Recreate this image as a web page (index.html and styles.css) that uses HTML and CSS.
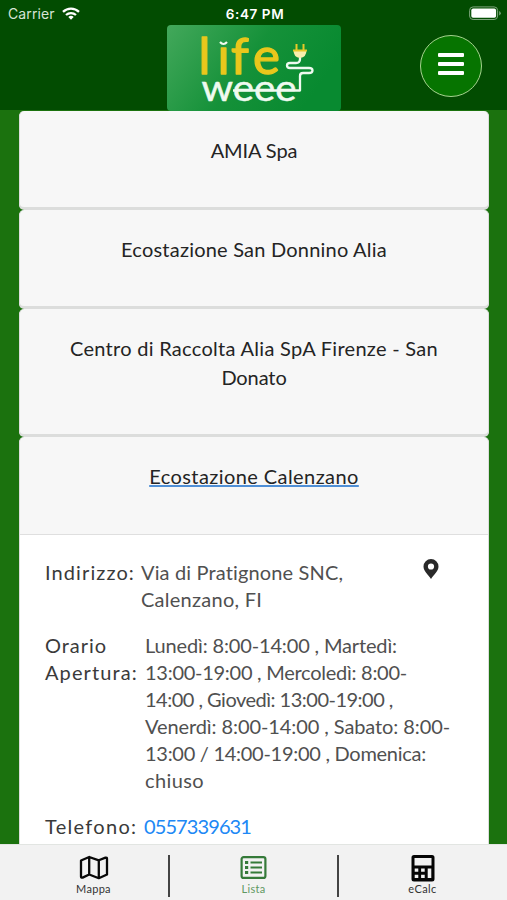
FILE: index.html
```html
<!DOCTYPE html>
<html lang="it">
<head>
<meta charset="utf-8">
<title>Life Weee</title>
<link rel="stylesheet" href="styles.css">
</head>
<body>
<div class="app">
  <header class="header">
    <div class="status">
      <div class="carrier"><span>Carrier</span>
        <svg width="18" height="14" viewBox="0 0 18 14" fill="none" stroke="#fff" stroke-width="2.3"><path d="M1 4.9a11.6 11.6 0 0 1 16 0M4 8a7.4 7.4 0 0 1 10 0"/><path d="M9 12.7 6.3 10a4 4 0 0 1 5.4 0z" fill="#fff" stroke="none"/></svg>
      </div>
      <span class="clock">6:47 PM</span>
      <svg class="battery" width="33" height="15" viewBox="0 0 33 15"><rect x=".6" y=".9" width="28" height="12.6" rx="3.5" fill="none" stroke="#7da47b"/><rect x="2.3" y="2.6" width="24.8" height="9.2" rx="1.8" fill="#fff"/><path d="M30.2 5v4.4q1.6-.8 1.6-2.2T30.2 5z" fill="#7da47b"/></svg>
    </div>
    <div class="bar">
      <svg class="logo" width="174" height="86" viewBox="0 0 174 86">
        <defs><linearGradient id="g" x1="0" y1="0" x2="1" y2=".35"><stop offset="0" stop-color="#43a85b"/><stop offset=".55" stop-color="#159139"/><stop offset="1" stop-color="#088a30"/></linearGradient></defs>
        <rect width="174" height="86" rx="4" fill="url(#g)"/>
        <text class="life" x="31.500 50.500 64 86" y="49">lıfe</text>
        <path d="M53 17q3.500 4 7 0" fill="none" stroke="#f3faf0" stroke-width="2.2"/>
        <text class="weee" x="34.500" y="75.700" textLength="95" lengthAdjust="spacingAndGlyphs">weee</text>
        <path d="M66 65.500h67V51q0-3 3-3h6q3.500 0 3.500-2.500T142 43h-19q-3 0-3-2.500t3-2.500h6q4 0 4-4V31" fill="none" stroke="#effaf0" stroke-width="2.300" stroke-linejoin="round"/>
        <path d="M126.500 25h13q0 7.500-6.500 8-6.500-.5-6.500-8z" fill="#f8efad"/>
        <path d="M129.500 19v6M136.500 19v6M126 25.500h14" stroke="#e8c928" stroke-width="2"/>
      </svg>
      <button class="menu" aria-label="Menu"><i></i><i></i><i></i></button>
    </div>
  </header>

  <main class="list">
    <section class="card"><h2><span class="t-amia">AMIA Spa</span></h2></section>
    <section class="card"><h2><span class="t-donnino">Ecostazione San Donnino Alia</span></h2></section>
    <section class="card"><h2><span class="t-centro">Centro di Raccolta Alia SpA Firenze - San</span><br><span class="t-amia">Donato</span></h2></section>
    <section class="card open">
      <h2><span class="t-calenzano">Ecostazione Calenzano</span></h2>
      <div class="details">
        <div class="row address"><div class="label">Indirizzo:</div>
          <div class="value"><span class="s-via">Via di Pratignone SNC,</span><br><span class="s-city">Calenzano, FI</span></div>
          <svg class="pin" width="16" height="20" viewBox="0 0 16 20"><path fill="#292929" fill-rule="evenodd" d="M8 0a7.500 7.500 0 0 1 7.500 7.500C15.500 12 11 15.500 8 20 5 15.500.5 12 .5 7.500A7.500 7.500 0 0 1 8 0zm0 4.400a3.100 3.100 0 1 0 0 6.200 3.100 3.100 0 0 0 0-6.200z"/></svg>
        </div>
        <div class="row"><div class="label wide"><span class="l-orario">Orario</span><br>Apertura:</div>
          <div class="value"><span class="s-mon">Lunedì: 8:00-14:00 , Martedì:</span><br><span class="s-tue">13:00-19:00 , Mercoledì: 8:00-</span><br><span class="s-wed">14:00 , Giovedì: 13:00-19:00 ,</span><br><span class="s-fri">Venerdì: 8:00-14:00 , Sabato: 8:00-</span><br><span class="s-sat">13:00 / 14:00-19:00 , Domenica:</span><br><span class="s-sun">chiuso</span></div>
        </div>
        <div class="row"><div class="label wide l-tel">Telefono:</div><div class="value"><a href="tel:0557339631">0557339631</a></div></div>
      </div>
    </section>
  </main>

  <nav class="tabs">
    <a class="tab">
      <svg width="30" height="25" viewBox="0 0 30 25" fill="none" stroke="#080808" stroke-width="2.300" stroke-linejoin="round"><path d="M2 5.500 10.200 2v17.500L3.600 22.600Q2 23 2 21.500zM10.200 2l9.600 3.300v17.900l-9.600-3.700M19.800 5.300l6.700-2.700Q28 2.300 28 3.800v15.700l-8.200 3.700"/></svg>
      <span class="t-mappa">Mappa</span></a>
    <a class="tab active">
      <svg width="27" height="25" viewBox="0 0 27 25" fill="none" stroke="#357a39"><rect x="1.600" y="2.100" width="23.800" height="20.800" rx="2" stroke-width="2.200"/><path d="M10.500 7.500H22M10.500 12.500H22M10.500 17.500H22" stroke-width="2"/><path d="M5 7.500h3.200M5 12.500h3.200M5 17.500h3.200" stroke-width="3"/></svg>
      <span class="t-lista">Lista</span></a>
    <a class="tab calc">
      <svg width="24" height="27" viewBox="0 0 24 27"><path fill="#050505" fill-rule="evenodd" d="M3 0h18q2.500 0 2.500 2.500v21.500q0 2.500-2.500 2.500H3Q.5 26.500.5 24V2.500Q.5 0 3 0zM3.500 3v7.500h17V3zM3.700 13.500v3.300h3.600v-3.300zm6.400 0v3.300h3.600v-3.300zm6.600 0v9.600h3.600v-9.600zM3.700 19.700v3.400h3.600v-3.400zm6.400 0v3.400h3.600v-3.400z"/></svg>
      <span class="t-ecalc">eCalc</span></a>
  </nav>
</div>
</body>
</html>
```
FILE: styles.css
```css
* { box-sizing: border-box; }
body { margin: 0; font-family: Lato, "Liberation Sans", sans-serif; }
.app { height: 900px; display: flex; flex-direction: column; overflow: hidden; background: #1b720e; }
.header { flex: none; height: 110px; background: #024c01; }
.status { height: 25px; padding: 2px 5px 0 8px; display: grid; grid-template-columns: 1fr auto 1fr; align-items: center; font: 14px Inter, sans-serif; color: #fff; }
.carrier { display: flex; align-items: center; gap: 7px; color: #d7e4d6; letter-spacing: .1px; }
.clock { font-weight: 600; font-size: 13.500px; letter-spacing: .6px; }
.battery { justify-self: end; }
.bar { height: 85px; padding: 0 25px 0 167px; display: flex; align-items: flex-start; justify-content: space-between; }
.logo { display: block; }
.life { font: 51px Lato, sans-serif; fill: #e9c71c; stroke: #e9c71c; stroke-width: 1.300px; stroke-linejoin: round; }
.weee { font: 37px Lato, sans-serif; fill: #effaf0; stroke: #effaf0; stroke-width: .5px; }
.menu { width: 62px; height: 62px; margin: 10px 0 0; padding: 0 0 5px; border: 1.500px solid #a6d38f; border-radius: 50%; background: #067400; display: flex; flex-direction: column; align-items: center; justify-content: center; gap: 5px; }
.menu i { width: 26px; height: 4px; border-radius: 1px; background: #fff; }

.list { flex: 1; min-height: 0; overflow: hidden; padding: 1px 18px 0 19px; }
.card { border-radius: 5px; background: #f7f7f7; border: solid #dcdddc; border-width: 0 1px 2px; margin-bottom: 1px; overflow: hidden; box-shadow: 0 1px #dcdddc; }
.card h2 { margin: 0; padding: 25px 20px 42px; font-size: 20px; font-weight: 400; line-height: 29px; text-align: center; color: #242424; }
.card.open { border-bottom: 0; }
.card.open h2 { border-bottom: 1px solid #dfdfdf; padding-bottom: 43px; }
.details { background: #fff; padding: 24px 25px 60px; font-size: 20px; line-height: 27px; color: #505050; }
.row { display: flex; margin-bottom: 19px; white-space: nowrap; }
.label { width: 96px; color: #3a3a3a; letter-spacing: 1.100px; }
.label.wide { width: 100px; }
.label.l-tel { width: 99px; letter-spacing: 1.300px; }
.address .value { flex: 1; }
.pin { margin: 0 24px 0 0; }
.row a { color: #2088f5; text-decoration: none; letter-spacing: -.9px; }

.t-amia { letter-spacing: -.1px; }
.t-donnino { letter-spacing: .21px; }
.t-centro { letter-spacing: .29px; }
.t-calenzano { letter-spacing: .42px; text-decoration: underline; text-decoration-color: #4f8fd6; text-decoration-thickness: 2px; text-underline-offset: 1px; text-decoration-skip-ink: none; }
.l-orario { letter-spacing: .95px; }
.s-via { letter-spacing: .14px; }
.s-city { letter-spacing: .25px; }
.s-mon { letter-spacing: -.15px; }
.s-tue { letter-spacing: -.27px; }
.s-wed { letter-spacing: -.51px; }
.s-fri { letter-spacing: -.09px; }
.s-sat { letter-spacing: -.28px; }
.s-sun { letter-spacing: .39px; }

.tabs { flex: none; height: 56px; background: #f2f2f2; border-top: 1px solid #e2e5e2; display: grid; grid-template-columns: 169px 169px 169px; }
.tab { position: relative; display: flex; flex-direction: column; align-items: center; justify-content: flex-end; padding-bottom: 4px; font-size: 11px; line-height: 14px; color: #333; }
.tab:first-child { padding-left: 18px; }
.tab:not(:last-child)::after { content: ""; position: absolute; right: -1px; top: 10px; width: 2px; height: 42px; background: #444; }
.tab svg { margin-bottom: 2px; }
.tab.calc svg { margin-bottom: 0; }
.tab.active { color: #5f9862; }
.t-mappa { letter-spacing: .3px; }
.t-lista { letter-spacing: .3px; }
.t-ecalc { letter-spacing: .4px; }
```
